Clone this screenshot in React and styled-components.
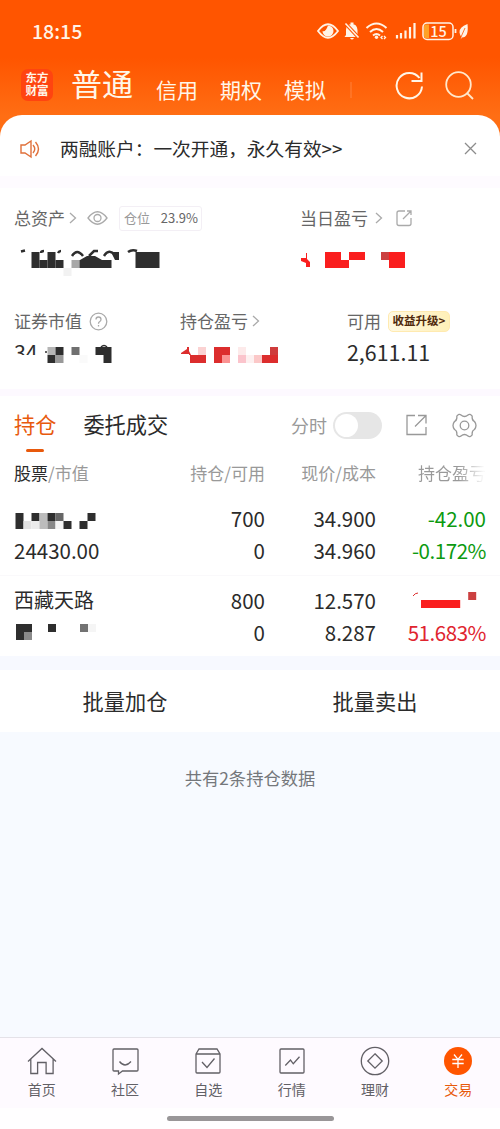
import React from "react";
import styled, { createGlobalStyle } from "styled-components";

const GlobalStyle = createGlobalStyle`
  * {
    box-sizing: border-box;
  }

  body {
    margin: 0;
    background: #f7faff;
    font-family: "Noto Sans CJK SC", sans-serif;
    color: #2b2b2b;
  }
`;

const Page = styled.div`
  width: 500px;
  height: 1129px;
  display: flex;
  flex-direction: column;
  overflow: hidden;
`;

const Top = styled.header`
  height: 176px;
  flex: none;
  background: linear-gradient(#ff5500 0, #ff5500 58px, #ff6e14 116px, #ff6e14 100%);
`;

const StatusBar = styled.div`
  height: 61px;
  padding: 0 31px 0 32px;
  display: flex;
  align-items: center;
  justify-content: space-between;
  color: #fff3e6;
`;

const Clock = styled.span`
  font-size: 19.5px;
  font-weight: 500;
  margin-top: -1px;
`;

const AccountBar = styled.div`
  height: 54px;
  padding: 0 25px 0 21px;
  display: flex;
  align-items: center;
  color: #fff6e8;
`;

const Logo = styled.div`
  width: 32px;
  height: 32px;
  margin: -6px 18px 0 0;
  padding-top: 3px;
  border-radius: 7px;
  background: #ff4410;
  font-family: "Liberation Sans", "Noto Sans CJK SC", sans-serif;
  font-size: 11.5px;
  line-height: 13px;
  font-weight: 700;
  text-align: center;
`;

const AccountTab = styled.span`
  font-size: ${(props) => (props.$active ? "31px" : "21px")};
  font-weight: 400;
  line-height: 46px;
  margin-right: ${(props) => (props.$active ? "23px" : "22px")};
  margin-top: ${(props) => (props.$active ? "-11px" : "1px")};
`;

const TabEdge = styled.span`
  width: 2px;
  height: 16px;
  margin: 4px 0 0 2px;
  background: rgba(255, 255, 255, 0.1);
`;

const HeaderIcons = styled.div`
  display: flex;
  gap: 20px;
  margin: -4px 0 0 auto;
`;

const Notice = styled.div`
  height: 61px;
  padding: 6px 22px 0 19px;
  display: flex;
  align-items: center;
  background: #fff;
  border-radius: 22px 22px 0 0;
  font-size: 18.7px;

  span {
    flex: 1;
    margin: -2px 0 0 18px;
  }
`;

const Gap = styled.div`
  height: ${(props) => props.$h}px;
  flex: none;
  background: ${(props) => props.$bg};
`;

const Assets = styled.section`
  height: 201px;
  flex: none;
  padding: 17px 0 0 14px;
  background: #fff;
`;

const AssetRow = styled.div`
  display: grid;
  grid-template-columns: ${(props) => props.$cols};
  height: 103px;
`;

const Label = styled.div`
  height: 26px;
  display: flex;
  align-items: center;
  color: #666;
  font-size: 17px;

  svg {
    flex: none;
  }
`;

const LabelText = styled.span`
  margin: -2px ${(props) => props.$gap || 0}px 0 0;
`;

const Position = styled.div`
  width: 83px;
  height: 25px;
  margin-left: 10px;
  padding: 0 3px 2px 4px;
  display: flex;
  align-items: center;
  justify-content: space-between;
  border: 1px solid #f3eff5;
  border-radius: 3px;
  color: #999;
  font-size: 13px;

  b {
    color: #666;
    font-weight: 400;
  }
`;

const Upgrade = styled.div`
  width: 62px;
  height: 21px;
  margin-left: 7px;
  border-radius: 5px;
  border: 1px solid #ffeab0;
  background: linear-gradient(90deg, #fff9e2, #fff0b8);
  color: #50290c;
  font-size: 11.5px;
  font-weight: 700;
  line-height: 17px;
  text-align: center;
  white-space: nowrap;
`;

const Amount = styled.div`
  font-size: 21.4px;
  line-height: 24px;
  margin-top: 6px;
`;

const Holdings = styled.section`
  height: 260px;
  flex: none;
  background: #fff;
`;

const HoldingsBar = styled.div`
  height: 61px;
  padding: 0 22px 0 14px;
  display: flex;
  align-items: center;
  color: #999;
  font-size: 18px;
`;

const Tab = styled.div`
  height: 61px;
  padding-top: 12px;
  margin-right: 27px;
  color: ${(props) => (props.$active ? "#e8590c" : "#2b2b2b")};
  font-size: 21.2px;
  line-height: 32px;

  &::after {
    content: "";
    display: ${(props) => (props.$active ? "block" : "none")};
    width: 18px;
    height: 3px;
    margin: 9px auto 0;
    border-radius: 2px;
    background: #e8590c;
  }
`;

const ToggleLabel = styled.span`
  margin: -4px 6px 0 auto;
`;

const Toggle = styled.div`
  width: 49px;
  height: 27px;
  margin: -3px 24px 0 0;
  padding: 2px;
  border-radius: 14px;
  background: #e6e6e6;

  &::before {
    content: "";
    display: block;
    width: 23px;
    height: 23px;
    border-radius: 50%;
    background: #fff;
  }
`;

const BarIcons = styled.div`
  display: flex;
  align-items: center;
  gap: 25px;
  margin: -3px 1px 0 0;
`;

const Line = styled.div`
  display: grid;
  grid-template-columns: 140px 111px 111px 110px;
  padding-left: 14px;
  height: 32px;
  line-height: 32px;
  font-size: 20.5px;

  > * {
    text-align: right;
    white-space: nowrap;
  }

  > :first-child {
    text-align: left;
  }
`;

const HeadLine = styled(Line)`
  height: 32px;
  color: #999;
  font-size: 17px;

  b {
    color: #2b2b2b;
    font-weight: 400;
  }
`;

const Stock = styled.div`
  height: ${(props) => (props.$first ? "87px" : "80px")};
  padding-top: ${(props) => (props.$first ? "13px" : "8px")};
  border-bottom: 1px solid ${(props) => (props.$first ? "#faf9fb" : "transparent")};
`;

const Name = styled.span`
  font-size: 20px;
`;

const Value = styled.span`
  color: ${(props) => props.$color || "inherit"};
  letter-spacing: ${(props) => (props.$tight ? "-0.45px" : "normal")};
`;

const Fading = styled.span`
  background: linear-gradient(90deg, #999 75%, rgba(153, 153, 153, 0.05) 98%);
  background-clip: text;
  color: transparent;
`;

const Actions = styled.div`
  height: 62px;
  flex: none;
  display: grid;
  grid-template-columns: 1fr 1fr;
  background: #fff;
`;

const Action = styled.button`
  border: 0;
  padding: 0 0 2px;
  background: none;
  color: #2b2b2b;
  font: 21.2px "Noto Sans CJK SC", sans-serif;
`;

const Summary = styled.div`
  flex: 1;
  padding-top: 33px;
  text-align: center;
  color: #74777b;
  font-size: 17.3px;
  line-height: 26px;
`;

const TabBar = styled.nav`
  height: 71px;
  flex: none;
  display: grid;
  grid-template-columns: repeat(6, 1fr);
  border-top: 1px solid #e4e2e8;
  background: #fefaff;
`;

const TabItem = styled.div`
  display: flex;
  flex-direction: column;
  align-items: center;
  padding-top: 8px;
  color: ${(props) => (props.$active ? "#e8590c" : "#626066")};
  font-size: 14px;
  line-height: 20px;

  svg {
    margin-bottom: 3px;
  }
`;

const HomeArea = styled.div`
  height: 21px;
  flex: none;
  padding-top: 8px;
  background: #fffeff;

  &::after {
    content: "";
    display: block;
    width: 167px;
    height: 5px;
    margin: 0 auto;
    border-radius: 3px;
    background: #999698;
  }
`;

const Blocks = styled.svg`
  display: block;
`;

const Icon = ({ w, h, sw = 1.3, color = "currentColor", children }) => (
  <svg width={w} height={h} viewBox={`0 0 ${w} ${h}`} fill="none" stroke={color} strokeWidth={sw}>
    {children}
  </svg>
);

// cells: [column, row, colour, columns wide, rows high], 8px per cell
const Mosaic = ({ w, h, x = 0, y = 0, cells, children }) => (
  <Blocks width={w} height={h} viewBox={`0 0 ${w} ${h}`}>
    {cells.map(([col, row, fill, cw = 1, ch = 1], i) => (
      <rect key={i} x={x + col * 8} y={y + row * 8} width={cw * 8} height={ch * 8} fill={fill} />
    ))}
    {children}
  </Blocks>
);

const Chevron = () => (
  <Icon w={16} h={14} color="#aaa"><path d="M5 2l5.500 5L5 12" /></Icon>
);

const D = "#2e2e2e";
const R = "#fa1e1e";
const C = "#dc2d2d";
const GREEN = "#0c9a10";

const totalCells = [
  [0, 0, D, 1, 2], [1, 1, D], [2, 0, D, 1, 2], [3, 1, D],
  [5, 1, "#a8a8a8"], [6, 1, D, 4], [13, 0, D, 3, 2], [4, 2, "#f2f2f2"],
];
const todayCells = [
  [3, 0, R, 2, 2], [5, 1, R], [6, 0, R, 2], [10, 0, "#cb4040"], [11, 0, R, 2, 2],
];
const marketCells = [
  [0, 0, "#b5b5b5"], [1, 0, D], [0, 1, D], [1, 1, "#999"],
  [3, 0, "#707070"], [6, 0, D, 2], [7, 1, D], [4, 1, "#fafafa"],
];
const profitCells = [
  [1, 1, C, 2], [2, 0, "#fbd2d2"], [4, 0, C, 2], [4, 1, C], [5, 1, "#fa9292"],
  [7, 0, "#fdeaea"], [7, 1, "#fbc4cc"], [8, 1, "#fdf0f0"], [9, 1, "#fbc8c8"],
  [10, 1, C, 2], [11, 0, "#cf3c3c"],
];
const nameCells = [
  [0, 0, D, 1, 2], [1, 1, "#e3e3e3"], [2, 0, D], [2, 1, "#ebebeb"], [3, 0, "#bcbcbc", 1, 2],
  [4, 0, D], [4, 1, "#888"], [5, 0, "#666"], [5, 1, "#f4f4f4"], [6, 1, D], [8, 1, D], [9, 0, D],
];
const valueCells = [
  [0, 0, D, 2], [0, 1, D], [1, 1, "#8a8a8a"], [4, 0, D], [8, 0, "#727272"], [9, 0, "#f5f5f5"],
];

const StatusIcons = () => (
  <svg width="152" height="22" viewBox="0 0 152 22" fill="none" stroke="#fff3e6">
    <path d="M1 11Q11 -2.500 21 11Q11 24.500 1 11Z" strokeWidth="1.8" />
    <path d="M11 5.500a5.500 5.500 0 1 1-5.500 5.500q3 1.500 5.500-5.500Z" fill="#fff3e6" stroke="none" />
    <path d="M29 15V10q0-6 6-6q5 0 5.500 6v5l1.500 2H27.500Z M33 18h4q-2 3-4 0Z M33.500 2.500h3v2h-3Z" fill="#fff3e6" stroke="none" />
    <path d="M28 3l14 15" stroke="#ff5500" strokeWidth="3.500" />
    <path d="M28.500 3.500l13 14" strokeWidth="1.600" />
    <path d="M49.500 8Q59.500 -1 69.500 8M53 12Q59.500 6 66 12M56 15.500Q59.500 12.500 63 15.500" strokeWidth="2" />
    <circle cx="59.500" cy="17.300" r="1.700" fill="#fff3e6" stroke="none" />
    <path d="M65.500 16l-1.500 1.500 1.500 1.500M67 16l1.500 1.500-1.500 1.500" strokeWidth="1.300" />
    <path d="M80 15v3.500M84 13v5.500M88.500 10.500v8M93 7v11.500M97.500 3v15.500" strokeWidth="2.200" />
    <rect x="106" y="3" width="30" height="16.500" rx="4" strokeWidth="1.500" />
    <path d="M108 4.500h4v13.500h-4q-1-1-1-2V6.500q0-1 1-2Z" fill="#ffa126" stroke="none" />
    <path d="M138.500 9v4" strokeWidth="1.800" />
    <path d="M150.500 4Q142 7 142.500 12.500q.5 3 2 4.500l-1 2.500 1.500-2q7 0 5.500-13.500Z" fill="#fff3e6" stroke="none" />
    <path d="M148 8l-4 9" stroke="#ff5500" strokeWidth=".8" />
    <text x="121.500" y="16.500" fontSize="14.500" fontWeight="500" textAnchor="middle" fill="#fff3e6" stroke="none">15</text>
  </svg>
);

const tabs = [
  ["首页", <path d="M1 15.500L15 2.500l14 13M3.800 13v14.500h6.800V16.500h8.500v11h7V13" />],
  ["社区", <path d="M4 3h23q1 0 1 1v20q0 1-1 1H12.500l-4 3v-3H4q-1 0-1-1V4q0-1 1-1ZM9.500 15.500q5.500 7 11.500 0" />],
  ["自选", <path d="M3 8l3-5h18l3 5v18q0 1-1 1H4q-1 0-1-1ZM3 8h24M9 16l5 5.500 7.500-9" />],
  ["行情", <path d="M4 3h22q1 0 1 1v22q0 1-1 1H4q-1 0-1-1V4q0-1 1-1ZM8.300 19.500l5.200-5.500 2.800 3.800 6.200-7" />],
  ["理财", <><circle cx="15" cy="15" r="13.700" /><path d="M15 7.800l7.200 7.200-7.200 7.200L7.800 15Z" /></>],
  ["交易", <><circle cx="15" cy="15" r="14" fill="#ff5500" stroke="none" /><path stroke="#fff" d="M11 8.500l4 4.800 4-4.800M9.300 13.500h11.400M9.300 17.500h11.400M15 13v9" /></>],
];

const App = () => {
  return (
    <Page>
      <GlobalStyle />
      <Top>
        <StatusBar>
          <Clock>18:15</Clock>
          <StatusIcons />
        </StatusBar>
        <AccountBar>
          <Logo>东方<br />财富</Logo>
          <AccountTab $active>普通</AccountTab>
          <AccountTab>信用</AccountTab>
          <AccountTab>期权</AccountTab>
          <AccountTab>模拟</AccountTab>
          <TabEdge />
          <HeaderIcons>
            <Icon w={30} h={30} sw={2}><path d="M24.500 7A12.700 12.700 0 1 0 27 15.500M16.500 10H26.500V1.500" /></Icon>
            <Icon w={30} h={30} sw={1.8} color="#ffe8cc"><circle cx="13.500" cy="13.500" r="12.300" /><path d="M22 22l6 6" /></Icon>
          </HeaderIcons>
        </AccountBar>
        <Notice>
          <Icon w={23} h={20} sw={1.4} color="#e0703a"><path d="M2 6h4l6-4v16l-6-4H2ZM14 6q3.500 4 0 8M16.500 3q6 7 0 14" /></Icon>
          <span>两融账户：一次开通，永久有效&gt;&gt;</span>
          <Icon w={15} h={15} color="#8c8c8c"><path d="M2 2l11 11M13 2L2 13" /></Icon>
        </Notice>
      </Top>
      <Gap $h={12} $bg="#fefbff" />
      <Assets>
        <AssetRow $cols="286px 1fr">
          <div>
            <Label>
              <LabelText>总资产</LabelText>
              <Chevron />
              <LabelText $gap={4} />
              <Icon w={24} h={18} color="#aaa"><path d="M3 9Q12.500 -3.500 22 9Q12.500 21.500 3 9Z" /><circle cx="12.500" cy="9" r="3.500" /></Icon>
              <Position>仓位<b>23.9%</b></Position>
            </Label>
            <Mosaic w={160} h={46} x={17.5} y={21} cells={totalCells}>
              <path d="M7 20.500l4-1M27 22q0-2 3-2M44 22q1-2 3-2M58 25q5-8 11 0M75 25l5-5h4M90 25q5-8 11-1M114 21q4-3 9-1" fill="none" stroke={D} strokeWidth="2.5" />
              <path d="M66 29l7-4h8l7 4ZM97 21h8v8h-4Z" fill={D} />
            </Mosaic>
          </div>
          <div>
            <Label>
              <LabelText $gap={3}>当日盈亏</LabelText>
              <Chevron />
              <Icon w={28} h={18} color="#aaa"><path d="M18 2h-6q-2 0-2 2v10.500q0 2 2 2h10q2 0 2-2V9M16 10l8-8M20 2h4v4" /></Icon>
            </Label>
            <Mosaic w={160} h={46} x={1} y={21} cells={todayCells}>
              <path d="M1 27h5v-5h1v6l3 3v5H6v-4l-5-2Z" fill={R} />
            </Mosaic>
          </div>
        </AssetRow>
        <AssetRow $cols="166px 167px 1fr">
          <div>
            <Label>
              <LabelText $gap={7}>证券市值</LabelText>
              <Icon w={19} h={19} color="#aaa"><circle cx="9.500" cy="9.500" r="8.300" /><path d="M7 7.500q0-2.500 2.500-2.500T12 7.500q0 1.300-1.500 2.200-1 .7-1 2M9.500 13v1.500" /></Icon>
            </Label>
            <Mosaic w={120} h={34} x={33.500} y={13} cells={marketCells}>
              <svg x="0" y="9" width="24" height="12">
                <text x="0" y="18" fontSize="21.400" fill={D}>34</text>
              </svg>
              <path d="M32 19v-2M87 13q3-3 6 0" fill="none" stroke={D} strokeWidth="1.500" />
            </Mosaic>
          </div>
          <div>
            <Label>
              <LabelText>持仓盈亏</LabelText>
              <Chevron />
            </Label>
            <Mosaic w={120} h={34} x={2} y={13} cells={profitCells}>
              <path d="M1 19l6-4v-2h2v4l2 4H9v-1H1Z" fill={C} />
            </Mosaic>
          </div>
          <div>
            <Label>
              <LabelText>可用</LabelText>
              <Upgrade>收益升级&gt;</Upgrade>
            </Label>
            <Amount>2,611.11</Amount>
          </div>
        </AssetRow>
      </Assets>
      <Gap $h={7} $bg="#fdf9ff" />
      <Holdings>
        <HoldingsBar>
          <Tab $active>持仓</Tab>
          <Tab>委托成交</Tab>
          <ToggleLabel>分时</ToggleLabel>
          <Toggle />
          <BarIcons>
            <Icon w={21} h={22}><path d="M9 1.500H1v19h19V13M9 12.500L20 1.500M12 1.500h8v8" /></Icon>
            <Icon w={25} h={25}>
              <path d="M9 2Q7 .3 4.800 3.200Q5.300 7.300 2.500 8.500Q-.5 12.500 2.500 16.500Q5.300 17.700 4.800 21.800Q7 24.700 9 23Q12.500 20 16 23Q18 24.700 20.200 21.800Q19.700 17.700 22.500 16.500Q25.500 12.500 22.500 8.500Q19.700 7.300 20.200 3.200Q18 .3 16 2Q12.500 5 9 2Z" />
              <circle cx="12.500" cy="12.500" r="4.300" />
            </Icon>
          </BarIcons>
        </HoldingsBar>
        <HeadLine>
          <span><b>股票</b>/市值</span>
          <span>持仓/可用</span>
          <span>现价/成本</span>
          <Fading>持仓盈亏</Fading>
        </HeadLine>
        <Stock $first>
          <Line>
            <Mosaic w={100} h={32} x={1.5} y={11} cells={nameCells} />
            <Value>700</Value>
            <Value>34.900</Value>
            <Value $color={GREEN}>-42.00</Value>
          </Line>
          <Line>
            <Value>24430.00</Value>
            <Value>0</Value>
            <Value>34.960</Value>
            <Value $color={GREEN} $tight>-0.172%</Value>
          </Line>
        </Stock>
        <Stock>
          <Line>
            <Name>西藏天路</Name>
            <Value>800</Value>
            <Value>12.570</Value>
            <Mosaic w={110} h={32} x={45} y={8} cells={[[0, 1, R, 4.9], [5.9, 0, "#cb4040"]]}>
              <path d="M37 12q2-3 5-3" fill="none" stroke={C} />
            </Mosaic>
          </Line>
          <Line>
            <Mosaic w={100} h={32} x={2} y={8} cells={valueCells} />
            <Value>0</Value>
            <Value>8.287</Value>
            <Value $color="#e0252f" $tight>51.683%</Value>
          </Line>
        </Stock>
      </Holdings>
      <Gap $h={14} $bg="#f7f9ff" />
      <Actions>
        <Action>批量加仓</Action>
        <Action>批量卖出</Action>
      </Actions>
      <Summary>共有2条持仓数据</Summary>
      <TabBar>
        {tabs.map(([name, icon], i) => (
          <TabItem key={name} $active={i === 5}>
            <Icon w={30} h={30}>{icon}</Icon>
            {name}
          </TabItem>
        ))}
      </TabBar>
      <HomeArea />
    </Page>
  );
};

export default App;
